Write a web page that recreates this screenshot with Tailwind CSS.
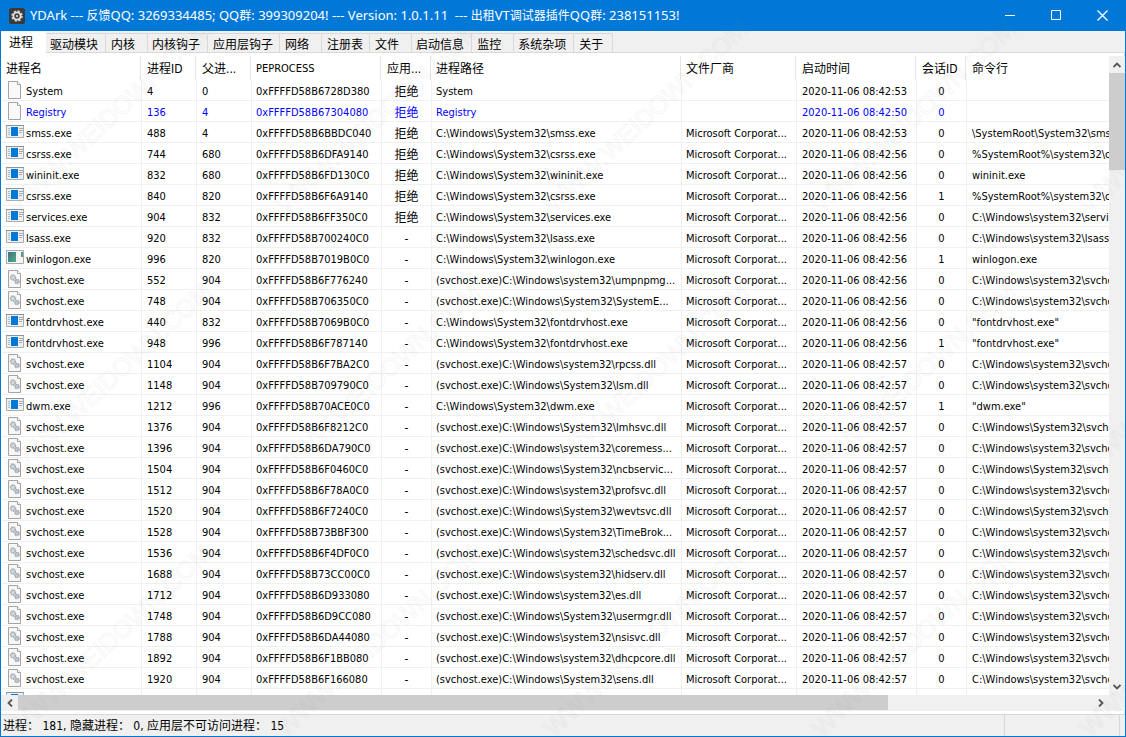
<!DOCTYPE html>
<html lang="zh-CN">
<head>
<meta charset="utf-8">
<title>YDArk</title>
<script src="https://cdn.jsdelivr.net/npm/@tailwindcss/browser@4"></script>
</head>
<body class="relative flex h-screen flex-col overflow-hidden border border-t-0 border-[#0078d7] bg-[#f0f0f0] font-['DejaVu_Sans_Condensed','Noto_Sans_CJK_SC',sans-serif] text-[11px] text-black">

<svg class="absolute size-0" aria-hidden="true">
  <defs><linearGradient id="lg" x1="0" y1="0" x2="1" y2="1"><stop offset="0" stop-color="#3f6f8f"/><stop offset="1" stop-color="#4fae7c"/></linearGradient></defs>
  <symbol id="doc" viewBox="0 0 18 18">
    <path d="M2.500.5h9l3 3v14h-12z" fill="#f9f9f9" stroke="#a3a3a3"/>
    <path d="M11.500.5v3h3" fill="#fff" stroke="#a3a3a3"/>
  </symbol>
  <symbol id="exe" viewBox="0 0 18 18">
    <path d="M.5 2.500h17v12H.5z" fill="#eef0f1" stroke="#a9adb0"/>
    <path d="M0 2h18v1H0z" fill="#8d9499"/>
    <path d="M5 4h7v9H5z" fill="#0078d7"/>
    <path d="M2 5.500h2M2 7.500h2M2 9.500h2M2 11.500h2" stroke="#b4b8bb"/>
    <path d="M13 5.500h4M13 7.500h4M13 9.500h3" stroke="#a3a8ac"/>
  </symbol>
  <symbol id="logon" viewBox="0 0 18 18">
    <path d="M.5 1.500h17v13H.5z" fill="#f4f4f4" stroke="#a9a9a9"/>
    <path d="M2 3h8v10H2z" fill="url(#lg)"/>
    <path d="M15 3h2v5h-2z" fill="#4b9c86"/>
  </symbol>
  <symbol id="svc" viewBox="0 0 18 18">
    <path d="M2.500.5h9l3 3v14h-12z" fill="#f7f7f7" stroke="#a3a3a3"/>
    <path d="M11.500.5v3h3" fill="#fff" stroke="#a3a3a3"/>
    <circle cx="7" cy="7.500" r="2.400" fill="#d5dade" stroke="#a9b0b5" stroke-width="1.600" stroke-dasharray="1.600 .5"/>
    <circle cx="11" cy="11.500" r="2" fill="#c3c9cd" stroke="#a4abb0" stroke-width="1.600" stroke-dasharray="1.400 .4"/>
  </symbol>
</svg>

<header class="flex h-[31px] shrink-0 items-center bg-[#0078d7] pl-2 text-white">
  <svg class="size-4" viewBox="0 0 16 16" aria-hidden="true">
    <rect width="16" height="16" rx="2.500" fill="#3a3a3a"/>
    <circle cx="8" cy="8" r="5" fill="none" stroke="#d4d4d4" stroke-width="1.500" stroke-dasharray="2.200 1.727"/>
    <circle cx="8" cy="8" r="3.600" fill="none" stroke="#e4e4e4" stroke-width="1.800"/>
    <circle cx="8" cy="8" r="1.200" fill="#c4c4c4"/>
  </svg>
  <h1 class="ml-[5px] flex-1 font-['Noto_Sans','Noto_Sans_CJK_SC',sans-serif] text-[13px] whitespace-pre">YDArk --- <span class="text-xs">反馈</span>QQ: 3269334485; QQ<span class="text-xs">群</span>: 399309204! --- Version: 1.0.1.11  --- <span class="text-xs">出租</span>VT<span class="text-xs">调试器插件</span>QQ<span class="text-xs">群</span>: 238151153!</h1>
  <button class="flex h-full w-[46px] items-center justify-center" aria-label="最小化"><svg class="size-[11px]" viewBox="0 0 11 11"><path d="M0 5.500h10" stroke="#fff"/></svg></button>
  <button class="flex h-full w-[46px] items-center justify-center" aria-label="最大化"><svg class="size-[11px]" viewBox="0 0 11 11"><path d="M.5.5h9v9h-9z" fill="none" stroke="#fff"/></svg></button>
  <button class="flex h-full w-[46px] items-center justify-center" aria-label="关闭"><svg class="size-[11px]" viewBox="0 0 11 11"><path d="M.5.5l10 10M10.500.5l-10 10" stroke="#fff" stroke-width="1.300"/></svg></button>
</header>

<nav id="tabs" role="tablist" class="flex h-[22px] shrink-0 items-end"></nav>

<main class="flex min-h-0 flex-1 flex-col border-r border-[#dcdcdc] bg-white pt-[3px] pb-[3px]">
  <div class="-mr-px flex min-h-0 flex-1">
    <div class="min-w-0 flex-1 overflow-hidden pl-px">
      <table class="w-full table-fixed border-separate border-spacing-0">
        <colgroup><col class="w-[140px]"><col class="w-[55px]"><col class="w-[55px]"><col class="w-[130px]"><col class="w-[50px]"><col class="w-[250px]"><col class="w-[115px]"><col class="w-[120px]"><col class="w-[50px]"><col></colgroup>
        <thead><tr id="head"></tr></thead>
        <tbody id="rows"></tbody>
      </table>
    </div>
    <div class="flex w-4 shrink-0 flex-col bg-[#f0f0f0]">
      <button class="flex h-[17px] items-center justify-center" aria-label="向上滚动"><svg class="size-2" viewBox="0 0 8 8"><path d="M.5 6L4 2.500 7.500 6" fill="none" stroke="#555" stroke-width="1.800"/></svg></button>
      <div class="h-[97px] bg-[#cdcdcd]"></div>
      <div class="flex-1"></div>
      <button class="flex h-[17px] items-center justify-center" aria-label="向下滚动"><svg class="size-2" viewBox="0 0 8 8"><path d="M.5 2L4 5.500 7.500 2" fill="none" stroke="#555" stroke-width="1.800"/></svg></button>
    </div>
  </div>
  <div class="-mr-px flex h-4 shrink-0 bg-[#f0f0f0] pr-4">
    <button class="flex w-[17px] items-center justify-center" aria-label="向左滚动"><svg class="size-2" viewBox="0 0 8 8"><path d="M6 .5L2.500 4 6 7.500" fill="none" stroke="#555" stroke-width="1.800"/></svg></button>
    <div class="flex-1"><div class="h-[15px] w-[81%] bg-[#cdcdcd]"></div></div>
    <button class="flex w-[17px] items-center justify-center" aria-label="向右滚动"><svg class="size-2" viewBox="0 0 8 8"><path d="M2 .5L5.500 4 2 7.500" fill="none" stroke="#555" stroke-width="1.800"/></svg></button>
  </div>
</main>

<footer class="flex h-[22px] shrink-0 items-center border-t border-[#d7d7d7] pr-[5px] text-xs">
  <p class="flex-1 whitespace-pre pl-0.5">进程： 181, 隐藏进程： 0, 应用层不可访问进程： 15</p>
  <div class="h-full w-[116px] border-x border-[#d7d7d7]"></div>
</footer>

<svg class="pointer-events-none absolute inset-0 size-full" aria-hidden="true">
  <defs>
    <pattern id="mark" x="-24" y="-16" width="268" height="262" patternUnits="userSpaceOnUse">
      <text x="132" y="140" transform="rotate(-43 134 131)" text-anchor="middle" font-family="Liberation Sans" font-size="25" fill="none" stroke="#808080" stroke-opacity=".08">WWW.WEIDOWN.COM</text>
    </pattern>
  </defs>
  <rect width="100%" height="100%" fill="url(#mark)"/>
</svg>

<script>
const tabs = ['进程','驱动模块','内核','内核钩子','应用层钩子','网络','注册表','文件','启动信息','监控','系统杂项','关于'];
document.getElementById('tabs').innerHTML = tabs.map((t, i) => i === 0
  ? `<button role="tab" aria-selected="true" class="h-[21px] w-[45px] bg-white pr-[5px] text-xs">${t}</button>`
  : `<button role="tab" aria-selected="false" class="h-5 border border-l-0 border-[#d9d9d9] pt-1 leading-[14px] ${t === '关于' ? 'pr-[9px] pl-[5px]' : t.length === 2 ? 'pr-[12px] pl-[5px]' : t.length === 4 ? 'pr-[7px] pl-[4px]' : 'pr-[6px] pl-[5px]'} text-xs">${t}</button>`
).join('') + '<div class="h-full flex-1 border-b border-[#d9d9d9]"></div>';

const heads = ['进程名','进程ID','父进...','PEPROCESS','应用...','进程路径','文件厂商','启动时间','会话ID','命令行'];
document.getElementById('head').innerHTML = heads.map((h, i) =>
  `<th scope="col" class="overflow-hidden p-0 text-left font-normal whitespace-nowrap"><div class="${i < 9 ? 'mr-px border-r border-[#e5e5e5]' : ''} h-6 pt-0.5 ${i === 3 ? 'pl-1 text-[11px]' : i === 0 || i === 5 || i === 6 ? 'pl-1 text-xs' : 'pl-[5px] text-xs'} leading-[22px]">${h}</div></th>`).join('');

const S = 'C:\\Windows\\System32\\', s = 'C:\\Windows\\system32\\', H = '(svchost.exe)';
// icon | name | pid | parent | eprocess tail | access | path | seconds | session | command line
const data = [
  ['doc','System','4','0','6728D380',1,'System','53','0',''],
  ['doc','Registry','136','4','67304080',1,'Registry','50','0',''],
  ['exe','smss.exe','488','4','6BBDC040',1,S+'smss.exe','53','0','\\SystemRoot\\System32\\smss.exe'],
  ['exe','csrss.exe','744','680','6DFA9140',1,S+'csrss.exe','56','0','%SystemRoot%\\system32\\csrss.exe'],
  ['exe','wininit.exe','832','680','6FD130C0',1,S+'wininit.exe','56','0','wininit.exe'],
  ['exe','csrss.exe','840','820','6F6A9140',1,S+'csrss.exe','56','1','%SystemRoot%\\system32\\csrss.exe'],
  ['exe','services.exe','904','832','6FF350C0',1,S+'services.exe','56','0',s+'services.exe'],
  ['exe','lsass.exe','920','832','700240C0',0,S+'lsass.exe','56','0',s+'lsass.exe'],
  ['logon','winlogon.exe','996','820','7019B0C0',0,S+'winlogon.exe','56','1','winlogon.exe'],
  ['svc','svchost.exe','552','904','6F776240',0,H+s+'umpnpmg...','56','0',s+'svchost.exe'],
  ['svc','svchost.exe','748','904','706350C0',0,H+S+'SystemE...','56','0',s+'svchost.exe'],
  ['exe','fontdrvhost.exe','440','832','7069B0C0',0,S+'fontdrvhost.exe','56','0','"fontdrvhost.exe"'],
  ['exe','fontdrvhost.exe','948','996','6F787140',0,S+'fontdrvhost.exe','56','1','"fontdrvhost.exe"'],
  ['svc','svchost.exe','1104','904','6F7BA2C0',0,H+s+'rpcss.dll','57','0',s+'svchost.exe'],
  ['svc','svchost.exe','1148','904','709790C0',0,H+S+'lsm.dll','57','0',s+'svchost.exe'],
  ['exe','dwm.exe','1212','996','70ACE0C0',0,S+'dwm.exe','57','1','"dwm.exe"'],
  ['svc','svchost.exe','1376','904','6F8212C0',0,H+S+'lmhsvc.dll','57','0',S+'svchost.exe'],
  ['svc','svchost.exe','1396','904','6DA790C0',0,H+s+'coremess...','57','0',s+'svchost.exe'],
  ['svc','svchost.exe','1504','904','6F0460C0',0,H+S+'ncbservic...','57','0',S+'svchost.exe'],
  ['svc','svchost.exe','1512','904','6F78A0C0',0,H+s+'profsvc.dll','57','0',s+'svchost.exe'],
  ['svc','svchost.exe','1520','904','6F7240C0',0,H+S+'wevtsvc.dll','57','0',S+'svchost.exe'],
  ['svc','svchost.exe','1528','904','73BBF300',0,H+S+'TimeBrok...','57','0',s+'svchost.exe'],
  ['svc','svchost.exe','1536','904','6F4DF0C0',0,H+s+'schedsvc.dll','57','0',s+'svchost.exe'],
  ['svc','svchost.exe','1688','904','73CC00C0',0,H+s+'hidserv.dll','57','0',s+'svchost.exe'],
  ['svc','svchost.exe','1712','904','6D933080',0,H+s+'es.dll','57','0',s+'svchost.exe'],
  ['svc','svchost.exe','1748','904','6D9CC080',0,H+S+'usermgr.dll','57','0',s+'svchost.exe'],
  ['svc','svchost.exe','1788','904','6DA44080',0,H+s+'nsisvc.dll','57','0',s+'svchost.exe'],
  ['svc','svchost.exe','1892','904','6F1BB080',0,H+s+'dhcpcore.dll','57','0',s+'svchost.exe'],
  ['svc','svchost.exe','1920','904','6F166080',0,H+S+'sens.dll','57','0',s+'svchost.exe'],
  ['exe']
];
document.getElementById('rows').innerHTML = data.map(d => {
  const icon = `<svg class="size-[18px] shrink-0" aria-hidden="true"><use href="#${d[0]}"/></svg>`;
  const full = d.length > 1;
  const cells = full ? [d[1], d[2], d[3], '0xFFFFD58B' + d[4], d[5] ? '拒绝' : '-', d[6], d[9] && d[1] !== 'System' ? 'Microsoft Corporat...' : '', '2020-11-06 08:42:' + d[7], d[8], d[9]] : Array(10).fill('');
  return `<tr class="${d[1] === 'Registry' ? 'text-[#0000ff]' : ''}">` + cells.map((c, i) => {
    if (i === 0) return `<td class="h-[21px] border-r border-b border-[#f0f0f0] p-0 pl-1"><div class="flex h-5 items-start gap-0.5 pt-px"><span class="contents">${icon}</span><span class="pt-[3px] leading-4">${c}</span></div></td>`;
    if (i === 4) return `<td class="h-[21px] border-r border-b border-[#f0f0f0] p-0 pt-1 text-center text-xs leading-4">${c}</td>`;
    if (i === 8) return `<td class="h-[21px] border-r border-b border-[#f0f0f0] p-0 pt-1 text-center leading-4">${c}</td>`;
    if (i === 9) return `<td class="h-[21px] overflow-hidden border-b border-[#f0f0f0] p-0 pt-1 pl-[5px] leading-4 whitespace-nowrap">${c}</td>`;
    return `<td class="h-[21px] overflow-hidden border-r border-b border-[#f0f0f0] p-0 pt-1 ${i === 3 || i === 5 || i === 6 ? 'pl-1' : 'pl-[5px]'} leading-4 whitespace-nowrap">${c}</td>`;
  }).join('') + '</tr>';
}).join('');
</script>
</body>
</html>
